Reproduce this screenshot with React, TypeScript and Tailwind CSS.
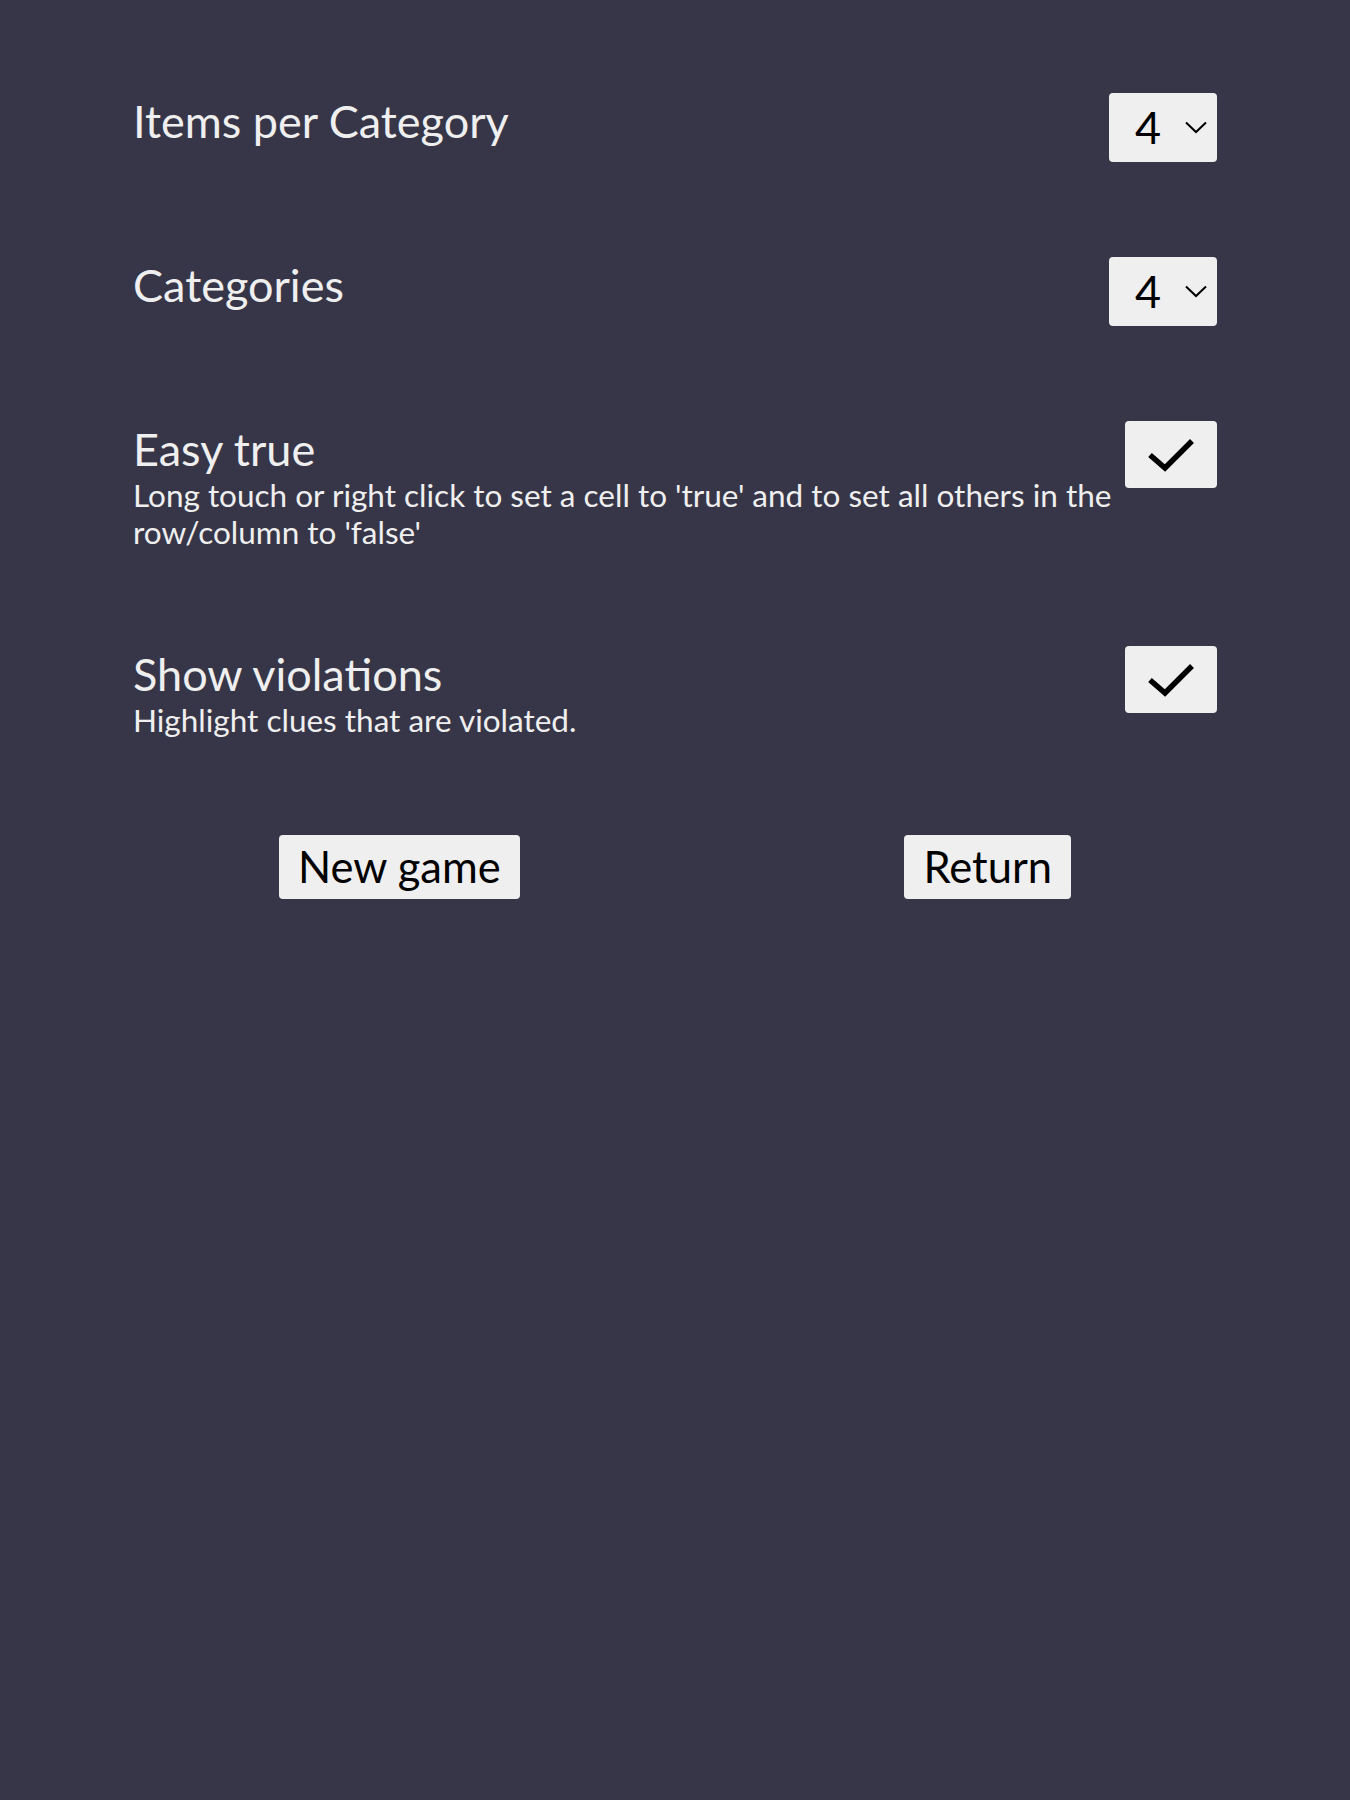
import React from "react";

function SelectBox({ value }: { value: string }) {
  return (
    <div className="flex h-[69px] w-[108px] shrink-0 items-center rounded-[4px] bg-[#efefef] pl-[26px] text-black">
      <span className="text-[45px] leading-none font-[Lato,sans-serif]">{value}</span>
      <svg className="ml-[24px]" width="22" height="13" viewBox="0 0 22 13" fill="none">
        <path d="M1 1.5 L11 11 L21 1.5" stroke="#000" strokeWidth="2" />
      </svg>
    </div>
  );
}

function CheckBox() {
  return (
    <div className="flex h-[67px] w-[92px] shrink-0 rounded-[4px] bg-[#efefef]">
      <svg width="92" height="67" viewBox="0 0 92 67" fill="none">
        <path d="M25 34 L40 47 L67 20" stroke="#000" strokeWidth="5.5" />
      </svg>
    </div>
  );
}

function Row({
  title,
  desc,
  control,
}: {
  title: string;
  desc?: React.ReactNode;
  control: React.ReactNode;
}) {
  return (
    <div className="flex items-start justify-between">
      <div className="flex flex-col">
        <div className="text-[45px] leading-[56px] text-[#efefef]">{title}</div>
        {desc && <div className="text-[31.5px] leading-[37px] text-[#efefef]">{desc}</div>}
      </div>
      {control}
    </div>
  );
}

export default function App() {
  return (
    <div className="min-h-[1800px] w-full bg-[#373648] font-[Lato,sans-serif]">
      <div className="mx-auto flex w-[1084px] flex-col gap-[95px] pt-[93px]">
        <Row title="Items per Category" control={<SelectBox value="4" />} />
        <Row title="Categories" control={<SelectBox value="4" />} />
        <Row
          title="Easy true"
          desc={
            <>
              Long touch or right click to set a cell to 'true' and to set all others in the
              <br />
              row/column to 'false'
            </>
          }
          control={<CheckBox />}
        />
        <Row title="Show violations" desc="Highlight clues that are violated." control={<CheckBox />} />
        <div className="mt-[1px] flex justify-between px-[146px]">
          <button className="flex h-[64px] items-center rounded-[4px] bg-[#efefef] px-[19px] text-[43.5px] text-black">
            New game
          </button>
          <button className="flex h-[64px] items-center rounded-[4px] bg-[#efefef] px-[19px] text-[43.5px] text-black">
            Return
          </button>
        </div>
      </div>
    </div>
  );
}
